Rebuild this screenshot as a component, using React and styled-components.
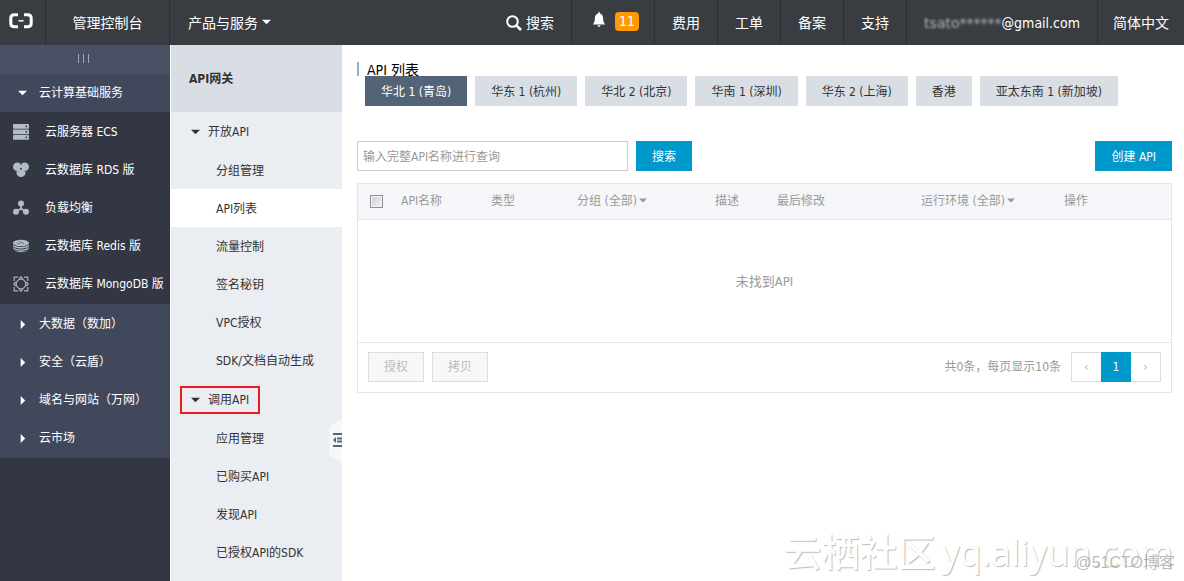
import { useState } from "react";
import styled, { createGlobalStyle, css } from "styled-components";

const GlobalStyle = createGlobalStyle`
  * {
    box-sizing: border-box;
  }

  body {
    margin: 0;
    background: #fff;
    color: #333;
    font-family: "DejaVu Sans Condensed", "Liberation Sans", "Noto Sans CJK SC", sans-serif;
    font-size: 12px;
    line-height: 18px;
  }

  button,
  input {
    font: inherit;
    color: inherit;
    margin: 0;
  }

  button {
    border: none;
    background: none;
    padding: 0;
    cursor: pointer;
  }

  a {
    color: inherit;
    text-decoration: none;
  }

  ul {
    list-style: none;
    margin: 0;
    padding: 0;
  }
`;

const Page = styled.div`
  position: relative;
  display: flex;
  flex-direction: column;
  min-height: 100vh;
  overflow: hidden;
`;

/* top bar */

const TopBar = styled.header`
  display: flex;
  justify-content: space-between;
  height: 45px;
  background: #393d41;
  color: #fff;
  font-size: 14px;
`;

const TopGroup = styled.nav`
  display: flex;
`;

const TopItem = styled.a`
  display: flex;
  align-items: center;
  padding: 0 ${({ $pad = 17 }) => $pad}px;
  gap: 4px;
  border-left: ${({ $divider = true }) =>
    $divider ? "1px solid #2b2f33" : "none"};
  white-space: nowrap;
`;

const LogoLink = styled(TopItem)`
  padding: 0 12px 4px 9px;
`;

const Console = styled(TopItem)`
  justify-content: center;
  width: 124px;
`;

const Notices = styled(TopItem)`
  gap: 9px;
  padding: 0 15px 2px 20px;
`;

const Badge = styled.span`
  padding: 0 4px;
  border-radius: 4px;
  background: #f90;
  line-height: 19px;
`;

const Masked = styled.span`
  color: #b4b7ba;
  font-family: "DejaVu Sans", sans-serif;
  filter: blur(1px);
`;

const Email = styled.span`
  display: inline-flex;
`;

/* product sidebar */

const Body = styled.div`
  display: flex;
  flex: 1;
`;

const Sidebar = styled.aside`
  flex: none;
  width: 170px;
  background: #333744;
  color: #fff;
`;

const FoldBar = styled.button`
  display: flex;
  align-items: center;
  justify-content: center;
  gap: 4px;
  width: 100%;
  height: 29px;
  padding: 0 4px 2px 0;
  background: #4a5064;

  i {
    width: 1px;
    height: 9px;
    background: #a2a7b5;
  }
`;

const SideGroup = styled.button`
  display: flex;
  align-items: center;
  gap: 12px;
  width: 100%;
  height: 38px;
  padding-left: 18px;
  background: #42485b;
  white-space: nowrap;
`;

const SideGroups = styled.div`
  padding: 1px 0;
  background: #42485b;
`;

const SideList = styled.ul`
  padding: 1px 0;
`;

const SideLink = styled.a`
  display: flex;
  align-items: center;
  gap: 16px;
  height: 38px;
  padding-left: 13px;
  white-space: nowrap;

  svg {
    flex: none;
  }
`;

/* gateway navigation */

const SubNav = styled.nav`
  position: relative;
  flex: none;
  width: 172px;
  border-left: 1px solid #fff;
  background: #eaedf1;
`;

const SubNavTitle = styled.h2`
  display: flex;
  align-items: center;
  height: 67px;
  margin: 0;
  padding-left: 18px;
  background: #d9dee4;
  font-size: 12px;
`;

const SubNavGroup = styled.div`
  padding: 1px 0;
`;

const SubNavHeading = styled.div`
  display: flex;
  align-items: center;
  height: 38px;
  padding-left: 9px;
`;

const SubNavToggle = styled.button`
  display: flex;
  align-items: center;
  gap: 8px;
  height: 28px;
  padding: 0 9px;
  border: 2px solid ${({ $marked }) => ($marked ? "#ee1b1b" : "transparent")};
`;

const SubNavLink = styled.a`
  display: flex;
  align-items: center;
  height: 38px;
  padding: 2px 0 0 45px;
  background: ${({ $active }) => ($active ? "#fff" : "transparent")};
`;

const Handle = styled.button`
  position: absolute;
  right: 0;
  top: 373px;
  height: 45px;

  svg {
    display: block;
  }
`;

/* content */

const Main = styled.main`
  flex: 1;
  min-width: 0;
  padding: 17px 12px 40px 15px;
`;

const Title = styled.h1`
  height: 14px;
  margin: 0;
  padding-left: 8px;
  border-left: 2px solid #7fb2dc;
  color: #000;
  font-size: 14px;
  font-weight: normal;
  line-height: 16px;
`;

const Tabs = styled.div`
  display: flex;
  flex-wrap: wrap;
  gap: 8px;
  padding-left: 8px;
`;

const Tab = styled.button`
  height: 30px;
  padding: 2px 16px 0;
  background: ${({ $active }) => ($active ? "#546478" : "#d9dee4")};
  color: ${({ $active }) => ($active ? "#fff" : "#333")};
`;

const Toolbar = styled.form`
  display: flex;
  gap: 8px;
  margin: 35px 0 12px;
`;

const SearchInput = styled.input`
  width: 271px;
  height: 30px;
  padding: 2px 5px 0;
  border: 1px solid #ccc;
  outline: none;

  &::placeholder {
    color: #999;
    opacity: 1;
  }
`;

const Button = styled.button`
  height: 30px;
  padding: 2px 16px 0;
  background: #09c;
  color: #fff;

  ${({ $push }) =>
    $push &&
    css`
      margin-left: auto;
    `}

  &:disabled {
    padding: 0 15px;
    border: 1px solid #ddd;
    background: #f7f7f7;
    color: #bbb;
    cursor: default;
  }
`;

const Panel = styled.section`
  border: 1px solid #e1e6eb;
`;

const Table = styled.table`
  width: 100%;
  table-layout: fixed;
  border-collapse: collapse;
  color: #999;

  th {
    height: 35px;
    padding: 0 0 0 10px;
    border-bottom: 1px solid #e1e6eb;
    background: #f5f6fa;
    font-weight: normal;
    text-align: left;
    white-space: nowrap;
  }
`;

const EmptyCell = styled.td`
  height: 123px;
  padding: 2px 0 0;
  border-bottom: 1px solid #e1e6eb;
  font-size: 13px;
  text-align: center;
`;

const Filter = styled.button`
  display: inline-flex;
  align-items: center;
  gap: 2px;
`;

const Checkbox = styled.input`
  display: block;
  appearance: none;
  width: 13px;
  height: 13px;
  margin-left: 2px;
  border: 1px solid #8e8f8f;
  background: linear-gradient(135deg, #c9ced3, #f6f6f6);
  box-shadow: inset 0 0 0 1px #f4f4f4;

  &:checked {
    background: #09c;
  }
`;

const PanelFooter = styled.footer`
  display: flex;
  align-items: center;
  gap: 8px;
  padding: 9px 10px 10px;
`;

const Total = styled.span`
  margin-left: auto;
  color: #999;
`;

const Pager = styled.div`
  display: flex;
  margin-left: 2px;
  border: 1px solid #ddd;
`;

const PageButton = styled.button`
  width: 29px;
  height: 28px;
  color: #bbb;

  ${({ $active }) =>
    $active &&
    css`
      width: 30px;
      height: 30px;
      margin: -1px 0;
      background: #09c;
      color: #fff;
    `}
`;

/* watermarks */

const Watermark = styled.div`
  position: absolute;
  right: 11px;
  bottom: 4px;
  display: flex;
  align-items: baseline;
  gap: 6px;
  color: #fff;
  font-family: "Open Sans", "Noto Sans CJK SC", sans-serif;
  font-size: 36px;
  line-height: 48px;
  text-shadow: 1px 1px 1px #bbb;
  white-space: nowrap;
  pointer-events: none;

  b {
    font-size: 38px;
    font-weight: 500;
  }
`;

const SiteMark = styled.div`
  position: absolute;
  right: 9px;
  bottom: 8px;
  color: rgba(120, 120, 120, 0.5);
  font-family: "Liberation Sans", "Noto Sans CJK SC", sans-serif;
  font-size: 16px;
  line-height: 20px;
  white-space: nowrap;
  pointer-events: none;
`;

const Caret = ({ dir = "down", size = 9 }) => (
  <svg width={size} height={size} viewBox="0 0 10 10" fill="currentColor" aria-hidden="true">
    <path d={dir === "down" ? "M0 2h10L5 7z" : "M3 0l5 5-5 5z"} />
  </svg>
);

const Logo = () => (
  <svg width="24" height="16" viewBox="0 0 24 16" fill="none" stroke="#fff" aria-label="Home">
    <path d="M9 1.8H5.5Q1.8 1.8 1.8 5v5.5Q1.8 13.8 5.5 13.8H9" strokeWidth="3" />
    <path d="M15 1.8h3.5Q22.2 1.8 22.2 5v5.5Q22.2 13.8 18.5 13.8H15" strokeWidth="3" />
    <path d="M9.5 7.8h5" strokeWidth="1.5" />
  </svg>
);

const SearchIcon = () => (
  <svg width="16" height="16" viewBox="0 0 16 16" fill="none" stroke="#fff" aria-hidden="true">
    <circle cx="6.5" cy="6.5" r="5.3" strokeWidth="2" />
    <path d="M10.3 10.3l4.7 4.7" strokeWidth="2.6" />
  </svg>
);

const BellIcon = () => (
  <svg width="14" height="22" viewBox="0 0 14 22" fill="#fff" aria-hidden="true">
    <path d="M6.3 1h1.4v1.6c2.3.4 3.2 2.2 3.4 4.9.2 2.800.7 4.400 2.100 5.900H.8c1.400-1.500 1.900-3.100 2.100-5.900.2-2.700 1.100-4.500 3.400-4.900z" />
    <path d="M5.2 14.300h3.600L7 16.300z" />
  </svg>
);

const iconProps = { width: 16, height: 16, viewBox: "0 0 16 16", "aria-hidden": true };

const EcsIcon = () => (
  <svg {...iconProps}>
    {[0, 5.5, 11].map((y) => (
      <g key={y}>
        <rect y={y} width="16" height="4.700" rx="0.800" fill="#b3bcc3" />
        <circle cx="13.300" cy={y + 2.300} r="0.900" fill="#333744" />
      </g>
    ))}
  </svg>
);

const RdsIcon = () => (
  <svg {...iconProps} fill="#b3bcc3">
    <circle cx="4.300" cy="4.800" r="4.300" />
    <circle cx="11.700" cy="4.800" r="4.300" />
    <circle cx="8" cy="10.500" r="4.600" />
    <circle cx="8" cy="6.800" r="1" fill="#333744" />
    <path d="M8 1.200v2M3.200 9.800l1.500-.8M12.800 9.800l-1.500-.8" stroke="#59606c" strokeWidth="0.800" />
  </svg>
);

const SlbIcon = () => (
  <svg {...iconProps} fill="#b3bcc3">
    <path d="M8 4v5M8 8.500L3 12M8 8.500l5 3.500" stroke="#b3bcc3" strokeWidth="1.800" />
    <circle cx="8" cy="3.600" r="3" />
    <circle cx="3" cy="11.700" r="3" />
    <circle cx="13" cy="11.700" r="3" />
  </svg>
);

const RedisIcon = () => (
  <svg {...iconProps} fill="#b3bcc3">
    <ellipse cx="8" cy="5" rx="8" ry="3.300" />
    <path d="M0 6.500v1.200c1.500 3.600 14.500 3.600 16 0V6.500c-2 3.200-14 3.200-16 0z" />
    <path d="M0 9v1.100c1.500 3.600 14.500 3.600 16 0V9c-2 3.200-14 3.200-16 0z" />
    <path d="M1 11.800c1.500 3.200 12.500 3.200 14 0-2.500 2-11.500 2-14 0z" />
    <path d="M4 5l3 1M6 3.500l5 2" stroke="#59606c" strokeWidth="0.800" />
  </svg>
);

const MongoIcon = () => (
  <svg {...iconProps} fill="none" stroke="#a9b2ba" strokeWidth="1.200">
    <circle cx="8" cy="8" r="4.800" />
    <path d="M1.200 5V1.200H5M11 1.200h3.800V5M14.800 11v3.800H11M5 14.800H1.200V11" />
    <path d="M6 2.800L8 .8l2 2M6 13.200l2 2 2-2M2.800 6l-2 2 2 2M13.200 6l2 2-2 2" />
  </svg>
);

const products = [
  { name: "云服务器 ECS", Icon: EcsIcon },
  { name: "云数据库 RDS 版", Icon: RdsIcon },
  { name: "负载均衡", Icon: SlbIcon },
  { name: "云数据库 Redis 版", Icon: RedisIcon },
  { name: "云数据库 MongoDB 版", Icon: MongoIcon },
];

const sideGroups = ["大数据（数加）", "安全（云盾）", "域名与网站（万网）", "云市场"];

const navGroups = [
  {
    name: "开放API",
    items: ["分组管理", "API列表", "流量控制", "签名秘钥", "VPC授权", "SDK/文档自动生成"],
  },
  {
    name: "调用API",
    marked: true,
    items: ["应用管理", "已购买API", "发现API", "已授权API的SDK"],
  },
];

const regions = [
  "华北 1 (青岛)",
  "华东 1 (杭州)",
  "华北 2 (北京)",
  "华南 1 (深圳)",
  "华东 2 (上海)",
  "香港",
  "亚太东南 1 (新加坡)",
];

const columns = [
  { name: "API名称", width: 90 },
  { name: "类型", width: 86 },
  { name: "分组 (全部)", width: 138, filter: true },
  { name: "描述", width: 62 },
  { name: "最后修改", width: 144 },
  { name: "运行环境 (全部)", width: 143, filter: true },
  { name: "操作", width: 117 },
];

function Header() {
  return (
    <TopBar>
      <TopGroup>
        <LogoLink href="#" $divider={false}>
          <Logo />
        </LogoLink>
        <Console href="#">管理控制台</Console>
        <TopItem href="#" $pad={18}>
          产品与服务
          <Caret />
        </TopItem>
      </TopGroup>
      <TopGroup>
        <TopItem href="#" $divider={false}>
          <SearchIcon />
          搜索
        </TopItem>
        <Notices href="#">
          <BellIcon />
          <Badge>11</Badge>
        </Notices>
        {["费用", "工单", "备案", "支持"].map((name) => (
          <TopItem href="#" key={name}>
            {name}
          </TopItem>
        ))}
        <TopItem href="#">
          <Email>
            <Masked>tsato******</Masked>@gmail.com
          </Email>
        </TopItem>
        <TopItem href="#" $pad={15}>
          简体中文
        </TopItem>
      </TopGroup>
    </TopBar>
  );
}

function ProductSidebar() {
  return (
    <Sidebar>
      <FoldBar type="button" aria-label="收起">
        <i />
        <i />
        <i />
      </FoldBar>
      <SideGroup type="button">
        <Caret />
        云计算基础服务
      </SideGroup>
      <SideList>
        {products.map(({ name, Icon }) => (
          <li key={name}>
            <SideLink href="#">
              <Icon />
              {name}
            </SideLink>
          </li>
        ))}
      </SideList>
      <SideGroups>
        {sideGroups.map((name) => (
          <SideGroup type="button" key={name}>
            <Caret dir="right" />
            {name}
          </SideGroup>
        ))}
      </SideGroups>
    </Sidebar>
  );
}

function GatewayNav() {
  return (
    <SubNav>
      <SubNavTitle>API网关</SubNavTitle>
      {navGroups.map((group) => (
        <SubNavGroup key={group.name}>
          <SubNavHeading>
            <SubNavToggle type="button" $marked={group.marked}>
              <Caret />
              {group.name}
            </SubNavToggle>
          </SubNavHeading>
          <ul>
            {group.items.map((item) => (
              <li key={item}>
                <SubNavLink href="#" $active={item === "API列表"}>
                  {item}
                </SubNavLink>
              </li>
            ))}
          </ul>
        </SubNavGroup>
      ))}
      <Handle type="button" aria-label="收起导航">
        <svg width="13" height="45" viewBox="0 0 13 45">
          <path d="M13 0v45L0 37V9z" fill="#f7f7f7" />
          <path
            d="M4 16h9M8 20.500h5M8 23.500h5M4 28h9"
            stroke="#546478"
            strokeWidth="2"
          />
          <path d="M7 19v6l-3-3z" fill="#546478" />
        </svg>
      </Handle>
    </SubNav>
  );
}

function ApiTable() {
  return (
    <Panel>
      <Table>
        <colgroup>
          <col width={33} />
          {columns.map((col) => (
            <col key={col.name} width={col.width} />
          ))}
        </colgroup>
        <thead>
          <tr>
            <th>
              <Checkbox type="checkbox" aria-label="全选" />
            </th>
            {columns.map((col) => (
              <th key={col.name}>
                {col.filter ? (
                  <Filter type="button">
                    {col.name}
                    <Caret size={8} />
                  </Filter>
                ) : (
                  col.name
                )}
              </th>
            ))}
          </tr>
        </thead>
        <tbody>
          <tr>
            <EmptyCell colSpan={8}>未找到API</EmptyCell>
          </tr>
        </tbody>
      </Table>
      <PanelFooter>
        <Button type="button" disabled>
          授权
        </Button>
        <Button type="button" disabled>
          拷贝
        </Button>
        <Total>共0条，每页显示10条</Total>
        <Pager>
          <PageButton type="button" aria-label="上一页">
            ‹
          </PageButton>
          <PageButton type="button" $active>
            1
          </PageButton>
          <PageButton type="button" aria-label="下一页">
            ›
          </PageButton>
        </Pager>
      </PanelFooter>
    </Panel>
  );
}

function App() {
  const [region, setRegion] = useState(regions[0]);

  return (
    <Page lang="zh-CN">
      <GlobalStyle />
      <Header />
      <Body>
        <ProductSidebar />
        <GatewayNav />
        <Main>
          <Title>API 列表</Title>
          <Tabs>
            {regions.map((name) => (
              <Tab
                type="button"
                key={name}
                $active={name === region}
                onClick={() => setRegion(name)}
              >
                {name}
              </Tab>
            ))}
          </Tabs>
          <Toolbar onSubmit={(e) => e.preventDefault()}>
            <SearchInput
              type="text"
              aria-label="API名称"
              placeholder="输入完整API名称进行查询"
            />
            <Button type="submit">搜索</Button>
            <Button type="button" $push>
              创建 API
            </Button>
          </Toolbar>
          <ApiTable />
        </Main>
      </Body>
      <Watermark>
        <b>云栖社区</b>
        <span>yq.aliyun.com</span>
      </Watermark>
      <SiteMark>@51CTO博客</SiteMark>
    </Page>
  );
}

export default App;
